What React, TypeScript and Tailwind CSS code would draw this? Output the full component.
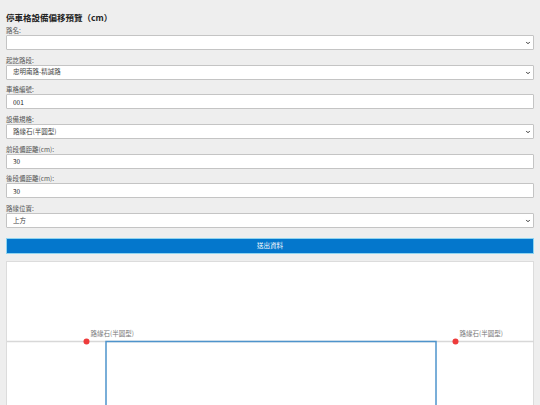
import { ChevronDown } from "lucide-react";

const font = { fontFamily: '"Noto Sans CJK TC", "Noto Sans", sans-serif' };

type Field = {
  label: string;
  kind: "select" | "input";
  value: string;
};

const fields: Field[] = [
  { label: "路名:", kind: "select", value: "" },
  { label: "起訖路段:", kind: "select", value: "忠明南路-精誠路" },
  { label: "車格編號:", kind: "input", value: "001" },
  { label: "設備規格:", kind: "select", value: "路緣石(半圓型)" },
  { label: "前段偏距離(cm):", kind: "input", value: "30" },
  { label: "後段偏距離(cm):", kind: "input", value: "30" },
  { label: "路緣位置:", kind: "select", value: "上方" },
];

const FieldRow = ({ field }: { field: Field }) => (
  <div className="flex flex-col mb-[5.7px]">
    <label className="block text-[6.5px] leading-[9px] text-[#555]">{field.label}</label>
    {field.kind === "select" ? (
      <div className="relative h-[15px]">
        <select
          className="block w-full h-[15px] appearance-none bg-white border border-[#c4c4c4] rounded-[1px] pl-[6px] text-[6.5px] text-[#444] outline-none"
          defaultValue={field.value}
        >
          <option value={field.value}>{field.value}</option>
        </select>
        <ChevronDown
          className="absolute right-[3px] top-[5px] size-[6px] text-[#333] pointer-events-none"
          strokeWidth={4}
        />
      </div>
    ) : (
      <input
        className="block w-full h-[15px] bg-white border border-[#c4c4c4] rounded-[1px] px-[6px] text-[6.5px] text-[#222] outline-none"
        defaultValue={field.value}
      />
    )}
  </div>
);

const Preview = () => (
  <div className="bg-white border border-[#dcdcdc] h-[300px] w-full">
    <svg width="527" height="298" className="block">
      <line x1="0" y1="79.5" x2="527" y2="79.5" stroke="#d8d8d8" strokeWidth="1.5" />
      <rect x="99" y="79.5" width="330" height="260" fill="none" stroke="#4e94cc" strokeWidth="1.5" />
      <circle cx="79.5" cy="79.5" r="3" fill="#ee3b3b" />
      <circle cx="448.5" cy="79.5" r="3" fill="#ee3b3b" />
      <text x="83.5" y="74" fontSize="6.5" fill="#777" style={font}>
        路緣石(半圓型)
      </text>
      <text x="452.5" y="74" fontSize="6.5" fill="#777" style={font}>
        路緣石(半圓型)
      </text>
    </svg>
  </div>
);

const App = () => {
  return (
    <section className="min-h-dvh w-full bg-[#eeeeee] px-[6px] pt-[12px]" style={font}>
      <h2 className="text-[8.5px] leading-[10px] font-bold text-[#222] mb-[4px]">
        停車格設備偏移預覽（cm）
      </h2>
      <form className="flex flex-col">
        {fields.map((f) => (
          <FieldRow key={f.label} field={f} />
        ))}
        <button
          type="button"
          className="mt-[4px] h-[16px] w-full bg-[#0477cc] border border-[#8fd4f0] text-white text-[6.5px]"
        >
          送出資料
        </button>
      </form>
      <div className="mt-[7px]">
        <Preview />
      </div>
    </section>
  );
};

export default App;
